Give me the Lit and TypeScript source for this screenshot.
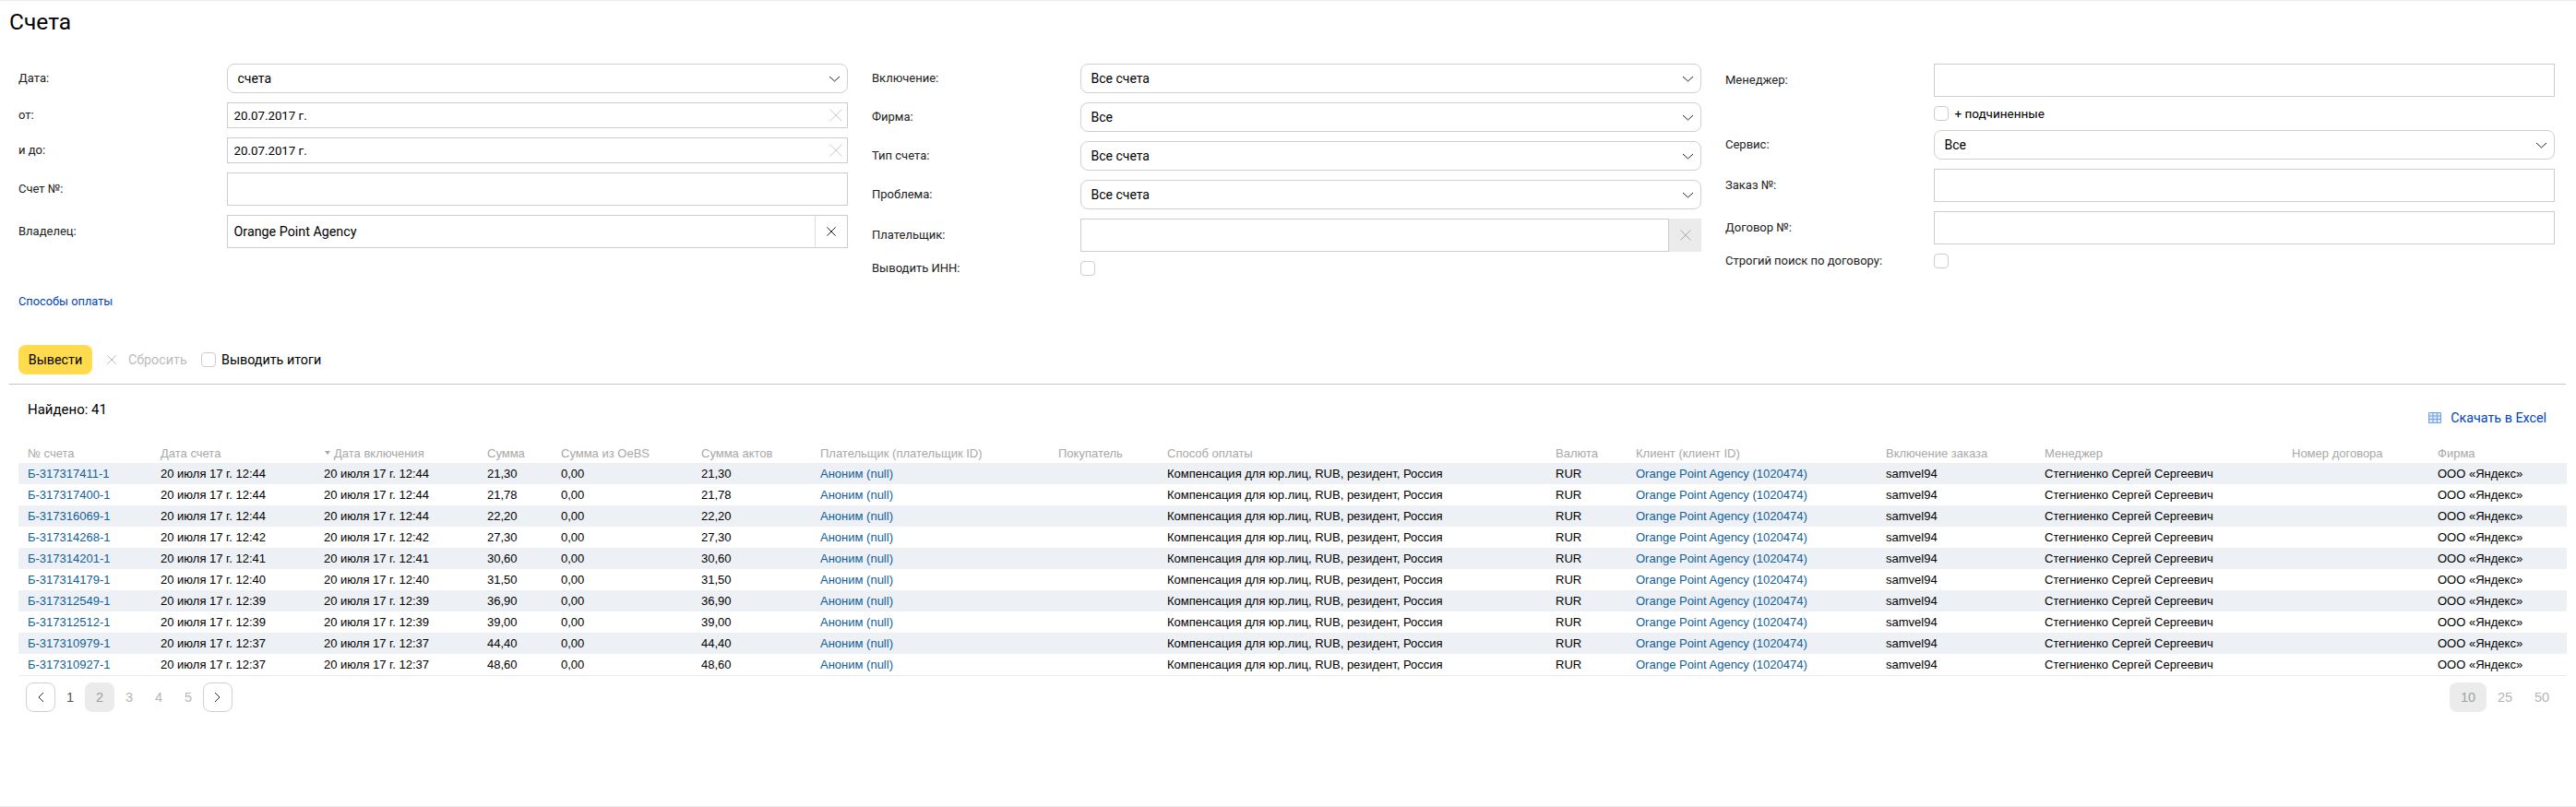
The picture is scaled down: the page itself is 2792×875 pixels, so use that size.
import { LitElement, html, css, svg } from "lit";
import { customElement } from "lit/decorators.js";

const chevron = html`<svg class="chev" width="13" height="7" viewBox="0 0 13 7"><path d="M1 1l5.500 5L12 1" fill="none" stroke="#222" stroke-width="1"/></svg>`;
const cross = (size: number, cls: string) => html`<svg class=${cls} width=${size} height=${size} viewBox="0 0 14 14">${svg`<path d="M.5.5l13 13M13.5.5l-13 13" fill="none" stroke="currentColor" stroke-width="1" vector-effect="non-scaling-stroke"/>`}</svg>`;

const rows = [
  ["Б-317317411-1", "12:44", "21,30"],
  ["Б-317317400-1", "12:44", "21,78"],
  ["Б-317316069-1", "12:44", "22,20"],
  ["Б-317314268-1", "12:42", "27,30"],
  ["Б-317314201-1", "12:41", "30,60"],
  ["Б-317314179-1", "12:40", "31,50"],
  ["Б-317312549-1", "12:39", "36,90"],
  ["Б-317312512-1", "12:39", "39,00"],
  ["Б-317310979-1", "12:37", "44,40"],
  ["Б-317310927-1", "12:37", "48,60"],
];

const heads = ["№ счета", "Дата счета", "Дата включения", "Сумма", "Сумма из OeBS", "Сумма актов", "Плательщик (плательщик ID)", "Покупатель", "Способ оплаты", "Валюта", "Клиент (клиент ID)", "Включение заказа", "Менеджер", "Номер договора", "Фирма"];

@customElement("app-root")
export class AppRoot extends LitElement {
  static styles = css`
    :host {
      display: block;
      box-sizing: border-box;
      height: 875px;
      border-top: 1px solid #ebebeb;
      border-bottom: 1px solid #ebebeb;
      background: #fff;
      color: #000;
      font-family: Roboto, "Noto Sans", sans-serif;
      font-size: 13px;
      overflow: hidden;
    }
    h1 {
      margin: 0;
      padding: 7px 0 0 10px;
      font-size: 24.5px;
      line-height: 32px;
      font-weight: 400;
    }
    .form {
      margin-top: 29px;
      padding: 0 23px 0 20px;
      display: grid;
      grid-template-columns: repeat(3, 899px);
      column-gap: 26px;
      height: 230px;
    }
    .col { display: flex; flex-direction: column; gap: 10px; }
    .row {
      display: grid;
      grid-template-columns: 225.5px 1fr;
      align-items: center;
    }
    .label { font-size: 13px; line-height: 16px; color: #222; }
    .select {
      box-sizing: border-box;
      height: 32px;
      border: 1px solid #d0d0d0;
      border-radius: 8px;
      padding: 0 7px 0 11px;
      display: flex;
      align-items: center;
      justify-content: space-between;
      font-size: 14px;
    }
    .chev { display: block; }
    .input {
      box-sizing: border-box;
      height: 36px;
      border: 1px solid #ccc;
      display: flex;
      align-items: center;
      padding-left: 7px;
      font-size: 14.3px;
    }
    .input.date { height: 28px; font-size: 13.3px; justify-content: space-between; padding-right: 5px; }
    .light { color: #ccc; display: block; }
    .combo { display: flex; height: 36px; }
    .combo .input { flex: 1; }
    .combo .clear {
      box-sizing: border-box;
      width: 36px;
      height: 36px;
      display: flex;
      align-items: center;
      justify-content: center;
      border: 1px solid #ccc;
      border-left-color: #ddd;
      margin-left: -1px;
      color: #222;
    }
    .combo .clear.off { background: #ebebeb; border: 0; margin-left: 0; width: 35px; color: #aaa; }
    .check {
      display: block;
      box-sizing: border-box;
      width: 16px;
      height: 16px;
      border: 1px solid #ccc;
      border-radius: 4px;
      background: #fff;
      flex: none;
    }
    .check-row { display: flex; align-items: center; gap: 7px; font-size: 13.5px; }
    .link { color: #04b; text-decoration: none; }
    .pay { display: block; margin: 20px 0 0 20px; line-height: 16px; font-size: 12.8px; }
    .actions {
      margin: 39px 0 0 20px;
      display: flex;
      align-items: center;
      height: 32px;
      font-size: 14.3px;
    }
    .go {
      box-sizing: border-box;
      width: 80px;
      height: 32px;
      background: #ffdb4d;
      border-radius: 8px;
      display: flex;
      align-items: center;
      justify-content: center;
    }
    .reset { display: flex; align-items: center; color: #bbb; margin-left: 16px; gap: 13px; width: 102px; }
    .reset svg { color: #bbb; display: block; }
    .actions .check-row { gap: 6px; font-size: 14.3px; }
    hr {
      margin: 10px 11px 0 10px;
      border: 0;
      border-top: 1px solid #c4c4c4;
      height: 0;
    }
    .summary {
      display: flex;
      justify-content: space-between;
      padding: 17px 32px 0 30px;
      height: 46px;
    }
    .found { font-size: 15px; line-height: 20px; }
    .excel { display: flex; align-items: center; gap: 9px; margin-top: 9px; height: 20px; font-size: 14.3px; }
    .excel svg { display: block; }
    table {
      margin-left: 20px;
      width: 2762px;
      table-layout: fixed;
      border-collapse: collapse;
      font-family: "Liberation Sans", Arial, sans-serif;
      font-size: 13px;
      border-bottom: 1px solid #ebebeb;
    }
    th, td { box-sizing: border-box; }
    th {
      font-weight: 400;
      color: #a8a8a8;
      text-align: left;
      height: 22px;
      padding: 0 0 0 10px;
      white-space: nowrap;
      overflow: hidden;
    }
    td {
      height: 23px;
      padding: 0 0 0 10px;
      white-space: nowrap;
      overflow: hidden;
      color: #000;
    }
    tr.odd td { background: #edf0f5; }
    td a { color: #0f6099; text-decoration: none; }
    .w1 { width: 144px; } .w2 { width: 177px; } .w3 { width: 177px; } .w4 { width: 80px; }
    .w5 { width: 152px; } .w6 { width: 129px; } .w7 { width: 258px; } .w8 { width: 118px; }
    .w9 { width: 421px; } .w10 { width: 87px; } .w11 { width: 271px; } .w12 { width: 172px; }
    .w13 { width: 268px; } .w14 { width: 158px; } .w15 { width: 150px; }
    .sort {
      display: inline-block;
      width: 0;
      height: 0;
      border-left: 3.5px solid transparent;
      border-right: 3.5px solid transparent;
      border-top: 4px solid #a8a8a8;
      margin: 0 4px 2px 1px;
      vertical-align: middle;
    }
    .pager {
      display: flex;
      justify-content: space-between;
      padding: 7px 17px 0 28px;
      font-family: "Liberation Sans", Arial, sans-serif;
      font-size: 14.5px;
      color: #b5b5b5;
    }
    .group { display: flex; }
    .pg {
      box-sizing: border-box;
      width: 32px;
      height: 32px;
      border-radius: 8px;
      display: flex;
      align-items: center;
      justify-content: center;
    }
    .pg.wide { width: 40px; }
    .pg.nav { border: 1px solid #d0d0d0; color: #222; }
    .pg.cur { background: #ebebeb; color: #a0a0a0; }
    .pg.dark { color: #555; }
  `;

  private label(t: string) { return html`<div class="label">${t}</div>`; }
  private sel(l: string, v: string) {
    return html`<div class="row">${this.label(l)}<div class="select"><span>${v}</span>${chevron}</div></div>`;
  }
  private inp(l: string) {
    return html`<div class="row">${this.label(l)}<div class="input"></div></div>`;
  }
  private date(l: string) {
    return html`<div class="row">${this.label(l)}<div class="input date"><span>20.07.2017 г.</span>${cross(14, "light")}</div></div>`;
  }

  render() {
    return html`
      <h1>Счета</h1>
      <div class="form">
        <div class="col">
          ${this.sel("Дата:", "счета")}
          ${this.date("от:")}
          ${this.date("и до:")}
          ${this.inp("Счет №:")}
          <div class="row">${this.label("Владелец:")}
            <div class="combo"><div class="input">Orange Point Agency</div><div class="clear">${cross(10, "")}</div></div>
          </div>
        </div>
        <div class="col">
          ${this.sel("Включение:", "Все счета")}
          ${this.sel("Фирма:", "Все")}
          ${this.sel("Тип счета:", "Все счета")}
          ${this.sel("Проблема:", "Все счета")}
          <div class="row">${this.label("Плательщик:")}
            <div class="combo"><div class="input"></div><div class="clear off">${cross(12, "")}</div></div>
          </div>
          <div class="row">${this.label("Выводить ИНН:")}<span class="check"></span></div>
        </div>
        <div class="col">
          ${this.inp("Менеджер:")}
          <div class="row"><div></div><div class="check-row"><span class="check"></span>+ подчиненные</div></div>
          ${this.sel("Сервис:", "Все")}
          ${this.inp("Заказ №:")}
          ${this.inp("Договор №:")}
          <div class="row">${this.label("Строгий поиск по договору:")}<span class="check"></span></div>
        </div>
      </div>
      <a class="link pay" href="#">Способы оплаты</a>
      <div class="actions">
        <div class="go">Вывести</div>
        <div class="reset">${cross(10, "")}<span>Сбросить</span></div>
        <div class="check-row"><span class="check"></span>Выводить итоги</div>
      </div>
      <hr />
      <div class="summary">
        <div class="found">Найдено: 41</div>
        <a class="link excel" href="#">
          <svg width="16" height="14" viewBox="0 0 16 14"><path fill="#dbe7fb" d="M1 1h14v12H1z"/><path d="M1.5 1.5h13v11h-13zM1.5 5h13M1.5 8.5h13M6 1.500v11M10.500 1.500v11" fill="none" stroke="#6f9fe8"/></svg>
          Скачать в Excel
        </a>
      </div>
      <table>
        <thead>
          <tr>${heads.map((h, i) => html`<th class="w${i + 1}">${i === 2 ? html`<span class="sort"></span>` : ""}${h}</th>`)}</tr>
        </thead>
        <tbody>
          ${rows.map(([id, t, sum], i) => html`
            <tr class=${i % 2 === 0 ? "odd" : ""}>
              <td><a href="#">${id}</a></td>
              <td>20 июля 17 г. ${t}</td>
              <td>20 июля 17 г. ${t}</td>
              <td>${sum}</td>
              <td>0,00</td>
              <td>${sum}</td>
              <td><a href="#">Аноним (null)</a></td>
              <td></td>
              <td>Компенсация для юр.лиц, RUB, резидент, Россия</td>
              <td>RUR</td>
              <td><a href="#">Orange Point Agency (1020474)</a></td>
              <td>samvel94</td>
              <td>Стегниенко Сергей Сергеевич</td>
              <td></td>
              <td>ООО «Яндекс»</td>
            </tr>`)}
        </tbody>
      </table>
      <div class="pager">
        <div class="group">
          <div class="pg nav"><svg width="8" height="12" viewBox="0 0 8 12"><path d="M7 1L2 6l5 5" fill="none" stroke="#222"/></svg></div>
          <div class="pg dark">1</div>
          <div class="pg cur">2</div>
          <div class="pg">3</div>
          <div class="pg">4</div>
          <div class="pg">5</div>
          <div class="pg nav"><svg width="8" height="12" viewBox="0 0 8 12"><path d="M1 1l5 5-5 5" fill="none" stroke="#222"/></svg></div>
        </div>
        <div class="group">
          <div class="pg wide cur">10</div>
          <div class="pg wide">25</div>
          <div class="pg wide">50</div>
        </div>
      </div>
    `;
  }
}
